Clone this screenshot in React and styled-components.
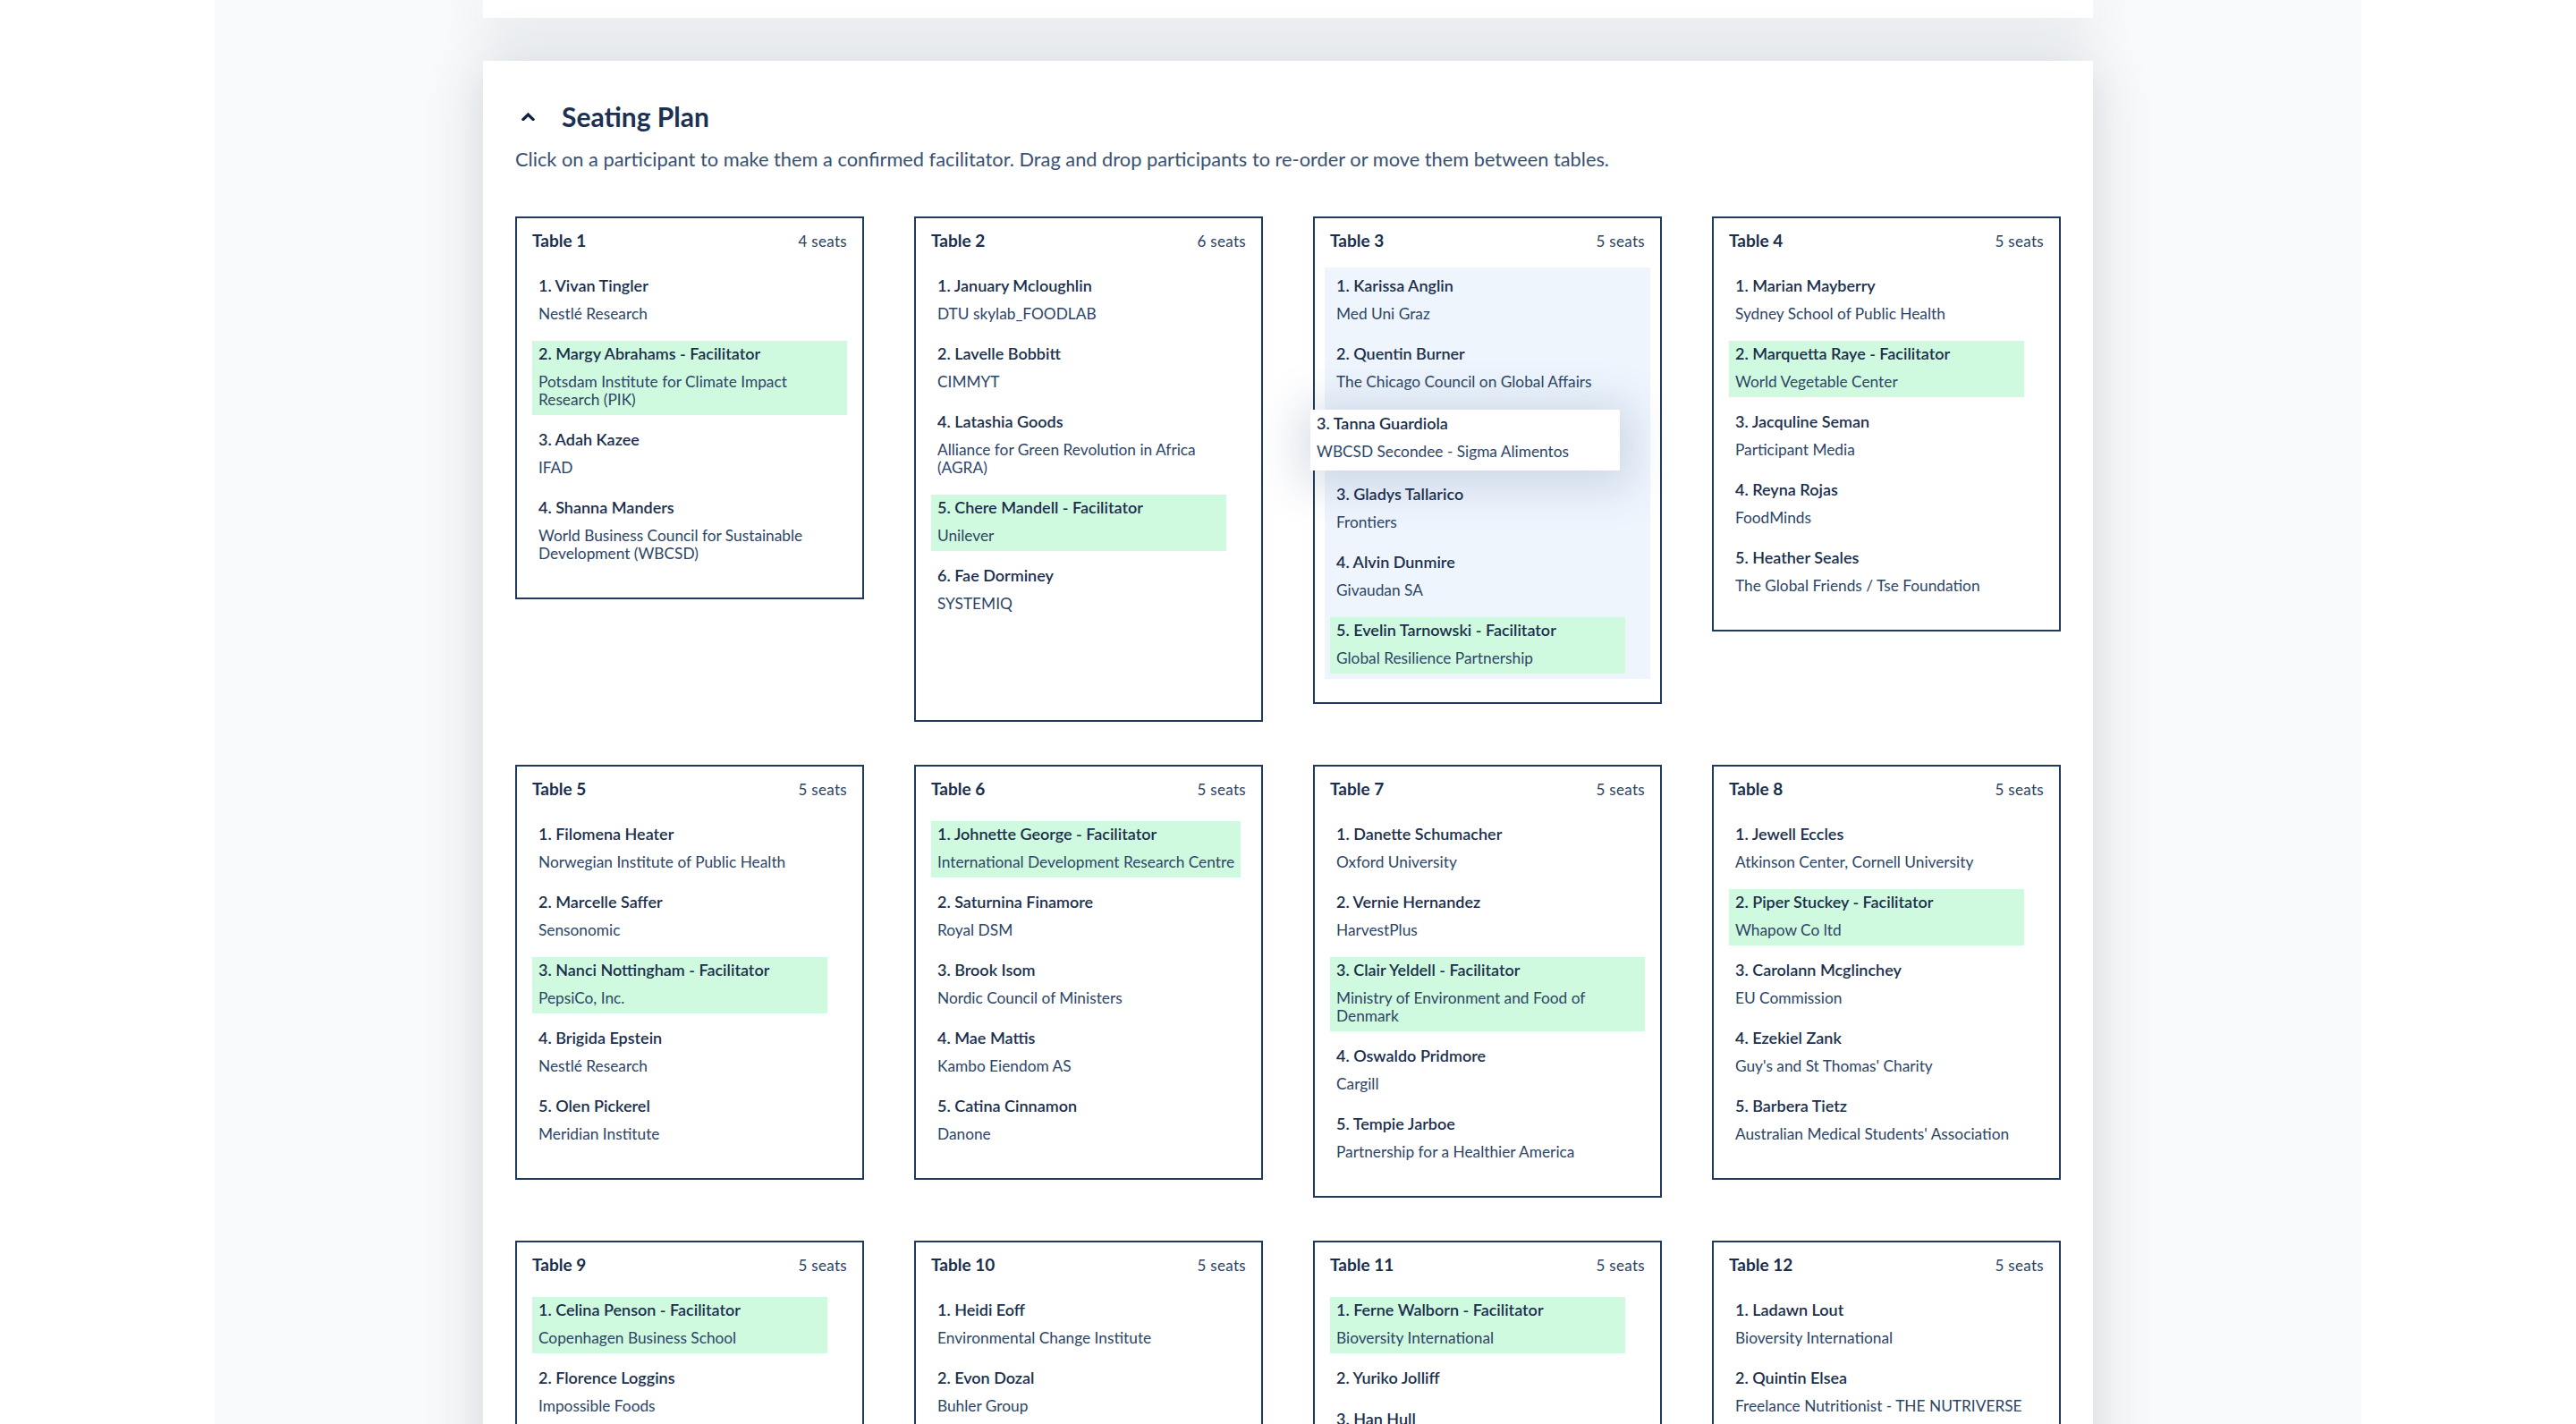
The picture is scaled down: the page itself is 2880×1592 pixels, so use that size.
import React from "react";
import styled, { createGlobalStyle } from "styled-components";

const GlobalStyle = createGlobalStyle`
	* {
		box-sizing: border-box;
	}
	html,
	body {
		margin: 0;
		padding: 0;
		background: #ffffff;
		overflow: hidden;
	}
	body {
		font-family: Lato, "Noto Sans", sans-serif;
		color: #1c3152;
	}
`;

const Page = styled("div")`
	width: 2400px;
	min-height: 100vh;
	margin: 0 auto;
	background-color: #f9fafb;
	display: flex;
	flex-direction: column;
	align-items: center;
`;

const Card = styled("section")`
	width: 1800px;
	background-color: #ffffff;
	box-shadow: 0 4px 60px rgba(28, 49, 82, 0.19);
`;

const PrevCard = styled(Card)`
	height: 20px;
	margin-bottom: 48px;
`;

const Panel = styled(Card)`
	padding: 44px 36px 60px;
`;

const PanelHeader = styled("div")`
	display: flex;
	align-items: center;
	gap: 24px;
	height: 36px;
`;

const Toggle = styled("button")`
	width: 28px;
	height: 28px;
	display: flex;
	align-items: center;
	justify-content: center;
	padding: 0;
	border: 0;
	background: none;
	color: #0f2340;
	cursor: pointer;
`;

const Title = styled("h2")`
	margin: 0;
	font-size: 30px;
	line-height: 36px;
	font-weight: 700;
	color: #1c3152;
`;

const Intro = styled("p")`
	margin: 18px 0 0;
	font-size: 21.8px;
	line-height: 24px;
	color: #3a5071;
`;

const Grid = styled("div")`
	margin-top: 52px;
	display: grid;
	grid-template-columns: repeat(4, 1fr);
	column-gap: 56px;
	row-gap: 48px;
	align-items: start;
`;

const Table = styled("div")`
	position: relative;
	border: 2px solid #1f3a5c;
	padding: 12px 11px 26px;
	background-color: #ffffff;
`;

const TableHead = styled("div")`
	display: flex;
	justify-content: space-between;
	align-items: center;
	height: 26px;
	margin: 0 6px 17px;
`;

const TableName = styled("h3")`
	margin: 0;
	font-size: 19px;
	line-height: 26px;
	font-weight: 700;
	color: #1a2e4c;
`;

const Seats = styled("span")`
	font-size: 17px;
	letter-spacing: 0.3px;
	color: #2c4262;
`;

const SeatList = styled("div")`
	display: flex;
	flex-direction: column;
	align-items: flex-start;
	gap: 13px;
	padding: 6px;
	background-color: ${(p) => (p.$over ? "#eef5fd" : "transparent")};
`;

const Seat = styled("div")`
	min-width: 330px;
	max-width: 100%;
	padding: 2px 7px 7px;
	background-color: ${(p) => (p.$facilitator ? "#d0fadf" : "transparent")};
	cursor: grab;
`;

const SeatName = styled("div")`
	font-size: 18px;
	line-height: 24px;
	font-weight: 600;
	color: #1b2f4d;
`;

const SeatOrg = styled("div")`
	margin-top: 10px;
	font-size: 17.3px;
	line-height: 20px;
	color: #2d4566;
`;

const Placeholder = styled("div")`
	height: 68px;
	align-self: stretch;
`;

const DragGhost = styled(Seat)`
	position: absolute;
	left: -5px;
	top: 214px;
	width: 346px;
	height: 68px;
	padding: 3px 7px 12px;
	background-color: #ffffff;
	box-shadow: 0 6px 50px 12px rgba(35, 65, 110, 0.17);
	z-index: 5;
`;

const ChevronUp = () => (
	<svg width="15" height="10" viewBox="0 0 15 10" fill="none">
		<polyline points="2,8.5 7.5,3 13,8.5" stroke="currentColor" strokeWidth="3.2" strokeLinecap="square" />
	</svg>
);

const f = (name, org) => ({ name, org, facilitator: true });
const p = (name, org) => ({ name, org });

const tables = [
	{
		id: 1,
		seats: 4,
		people: [
			p("1. Vivan Tingler", "Nestlé Research"),
			f("2. Margy Abrahams - Facilitator", "Potsdam Institute for Climate Impact Research (PIK)"),
			p("3. Adah Kazee", "IFAD"),
			p("4. Shanna Manders", "World Business Council for Sustainable Development (WBCSD)"),
		],
	},
	{
		id: 2,
		seats: 6,
		homePlaceholder: true,
		people: [
			p("1. January Mcloughlin", "DTU skylab_FOODLAB"),
			p("2. Lavelle Bobbitt", "CIMMYT"),
			p("4. Latashia Goods", "Alliance for Green Revolution in Africa (AGRA)"),
			f("5. Chere Mandell - Facilitator", "Unilever"),
			p("6. Fae Dorminey", "SYSTEMIQ"),
		],
	},
	{
		id: 3,
		seats: 5,
		over: true,
		dropAt: 2,
		dragging: p("3. Tanna Guardiola", "WBCSD Secondee - Sigma Alimentos"),
		people: [
			p("1. Karissa Anglin", "Med Uni Graz"),
			p("2. Quentin Burner", "The Chicago Council on Global Affairs"),
			p("3. Gladys Tallarico", "Frontiers"),
			p("4. Alvin Dunmire", "Givaudan SA"),
			f("5. Evelin Tarnowski - Facilitator", "Global Resilience Partnership"),
		],
	},
	{
		id: 4,
		seats: 5,
		people: [
			p("1. Marian Mayberry", "Sydney School of Public Health"),
			f("2. Marquetta Raye - Facilitator", "World Vegetable Center"),
			p("3. Jacquline Seman", "Participant Media"),
			p("4. Reyna Rojas", "FoodMinds"),
			p("5. Heather Seales", "The Global Friends / Tse Foundation"),
		],
	},
	{
		id: 5,
		seats: 5,
		people: [
			p("1. Filomena Heater", "Norwegian Institute of Public Health"),
			p("2. Marcelle Saffer", "Sensonomic"),
			f("3. Nanci Nottingham - Facilitator", "PepsiCo, Inc."),
			p("4. Brigida Epstein", "Nestlé Research"),
			p("5. Olen Pickerel", "Meridian Institute"),
		],
	},
	{
		id: 6,
		seats: 5,
		people: [
			f("1. Johnette George - Facilitator", "International Development Research Centre"),
			p("2. Saturnina Finamore", "Royal DSM"),
			p("3. Brook Isom", "Nordic Council of Ministers"),
			p("4. Mae Mattis", "Kambo Eiendom AS"),
			p("5. Catina Cinnamon", "Danone"),
		],
	},
	{
		id: 7,
		seats: 5,
		people: [
			p("1. Danette Schumacher", "Oxford University"),
			p("2. Vernie Hernandez", "HarvestPlus"),
			f("3. Clair Yeldell - Facilitator", "Ministry of Environment and Food of Denmark"),
			p("4. Oswaldo Pridmore", "Cargill"),
			p("5. Tempie Jarboe", "Partnership for a Healthier America"),
		],
	},
	{
		id: 8,
		seats: 5,
		people: [
			p("1. Jewell Eccles", "Atkinson Center, Cornell University"),
			f("2. Piper Stuckey - Facilitator", "Whapow Co ltd"),
			p("3. Carolann Mcglinchey", "EU Commission"),
			p("4. Ezekiel Zank", "Guy's and St Thomas' Charity"),
			p("5. Barbera Tietz", "Australian Medical Students' Association"),
		],
	},
	{
		id: 9,
		seats: 5,
		people: [
			f("1. Celina Penson - Facilitator", "Copenhagen Business School"),
			p("2. Florence Loggins", "Impossible Foods"),
			p("3. Maryann Stoll", "Rabobank"),
			p("4. Deon Marcelli", "Wageningen University"),
			p("5. Irvin Haddad", "FAO"),
		],
	},
	{
		id: 10,
		seats: 5,
		people: [
			p("1. Heidi Eoff", "Environmental Change Institute"),
			p("2. Evon Dozal", "Buhler Group"),
			p("3. Lorine Kuhl", "Yara International"),
			p("4. Sade Pruett", "EAT Foundation"),
			p("5. Ross Holton", "Danone"),
		],
	},
	{
		id: 11,
		seats: 5,
		people: [
			f("1. Ferne Walborn - Facilitator", "Bioversity International"),
			p("2. Yuriko Jolliff", ""),
			p("3. Han Hull", "Olam International"),
			p("4. Kyla Brandt", "WWF"),
			p("5. Otis Mccrary", "Nestlé Research"),
		],
	},
	{
		id: 12,
		seats: 5,
		people: [
			p("1. Ladawn Lout", "Bioversity International"),
			p("2. Quintin Elsea", "Freelance Nutritionist - THE NUTRIVERSE"),
			p("3. Royce Tamez", "GAIN"),
			p("4. Ilse Barlow", "Stockholm Resilience Centre"),
			p("5. Nell Ormsby", "IFPRI"),
		],
	},
];

const SeatItem = ({ person }) => (
	<Seat $facilitator={person.facilitator}>
		<SeatName>{person.name}</SeatName>
		{person.org && <SeatOrg>{person.org}</SeatOrg>}
	</Seat>
);

const TableCard = ({ table }) => {
	const items = table.people.map((person) => <SeatItem key={person.name} person={person} />);
	if (table.dropAt !== undefined) {
		items.splice(table.dropAt, 0, <Placeholder key="drop" />);
	}
	if (table.homePlaceholder) {
		items.push(<Placeholder key="home" />);
	}
	return (
		<Table>
			<TableHead>
				<TableName>Table {table.id}</TableName>
				<Seats>{table.seats} seats</Seats>
			</TableHead>
			<SeatList $over={table.over}>{items}</SeatList>
			{table.dragging && (
				<DragGhost>
					<SeatName>{table.dragging.name}</SeatName>
					<SeatOrg>{table.dragging.org}</SeatOrg>
				</DragGhost>
			)}
		</Table>
	);
};

const App = () => {
	return (
		<>
			<GlobalStyle />
			<Page>
				<PrevCard />
				<Panel>
					<PanelHeader>
						<Toggle aria-label="Collapse">
							<ChevronUp />
						</Toggle>
						<Title>Seating Plan</Title>
					</PanelHeader>
					<Intro>
						Click on a participant to make them a confirmed facilitator. Drag and drop participants to re-order or move them
						between tables.
					</Intro>
					<Grid>
						{tables.map((table) => (
							<TableCard key={table.id} table={table} />
						))}
					</Grid>
				</Panel>
			</Page>
		</>
	);
};

export default App;
